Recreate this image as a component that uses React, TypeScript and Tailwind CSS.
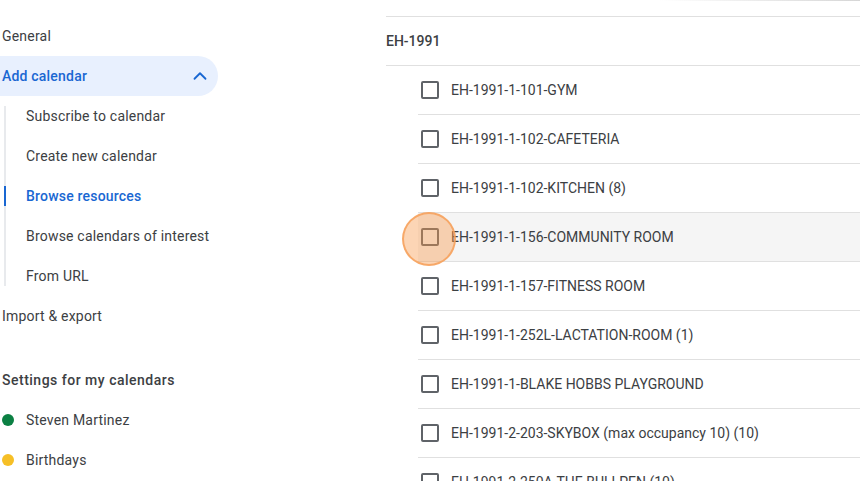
import { ChevronUp } from "lucide-react";

const subItems = [
  "Subscribe to calendar",
  "Create new calendar",
  "Browse resources",
  "Browse calendars of interest",
  "From URL",
];

const resources = [
  "EH-1991-1-101-GYM",
  "EH-1991-1-102-CAFETERIA",
  "EH-1991-1-102-KITCHEN (8)",
  "EH-1991-1-156-COMMUNITY ROOM",
  "EH-1991-1-157-FITNESS ROOM",
  "EH-1991-1-252L-LACTATION-ROOM (1)",
  "EH-1991-1-BLAKE HOBBS PLAYGROUND",
  "EH-1991-2-203-SKYBOX (max occupancy 10) (10)",
  "EH-1991-2-250A-THE BULLPEN (10)",
];

function Sidebar() {
  return (
    <nav className="w-[218px] shrink-0 pt-4 text-[14px] tracking-[0.2px] text-[#3c4043]">
      <div className="flex h-10 items-center pl-[2px]">General</div>

      <div className="flex h-10 items-center justify-between rounded-r-full bg-[#e8f0fe] pl-[2px] pr-[7px] font-medium text-[#1967d2]">
        <span>Add calendar</span>
        <ChevronUp size={22} strokeWidth={2} />
      </div>

      <div className="relative">
        <span className="absolute left-[4px] top-[10px] bottom-[10px] w-[2px] bg-[#e8eaed]" />
        {subItems.map((item) => {
          const active = item === "Browse resources";
          return (
            <div
              key={item}
              className={`relative flex h-10 items-center pl-[26px] ${
                active ? "font-medium text-[#1967d2]" : ""
              }`}
            >
              {active ? (
                <span className="absolute left-[4px] top-[10px] h-5 w-[2px] bg-[#1967d2]" />
              ) : null}
              {item}
            </div>
          );
        })}
      </div>

      <div className="flex h-10 items-center pl-[2px]">Import &amp; export</div>

      <div className="mt-6 flex h-10 items-center pl-[2px] font-medium tracking-[0.5px]">
        Settings for my calendars
      </div>
      <div className="flex h-10 items-center gap-[12px] pl-[2px]">
        <span className="h-3 w-3 rounded-full bg-[#0b8043]" />
        Steven Martinez
      </div>
      <div className="flex h-10 items-center gap-[12px] pl-[2px]">
        <span className="h-3 w-3 rounded-full bg-[#f6bf26]" />
        Birthdays
      </div>
    </nav>
  );
}

function ResourceList() {
  return (
    <section className="ml-[168px] flex-1 pt-4 text-[14px] text-[#3c4043]">
      <div className="flex h-[50px] items-center border-y border-[#e0e0e0] font-medium">
        EH-1991
      </div>
      <div className="ml-[32px]">
        {resources.map((name) => {
          const hovered = name === "EH-1991-1-156-COMMUNITY ROOM";
          return (
            <div
              key={name}
              className={`relative flex h-[49px] items-center gap-[12px] border-b border-[#e0e0e0] pl-[3px] ${
                hovered ? "bg-[#f5f5f5]" : ""
              }`}
            >
              <span className="h-[18px] w-[18px] shrink-0 rounded-[2px] border-2 border-[#5f6368]" />
              <span className="whitespace-nowrap">{name}</span>
              {hovered ? (
                <span className="absolute left-[-16px] top-[-1px] h-[54px] w-[54px] rounded-full border-2 border-[rgba(246,160,90,0.85)] bg-[rgba(248,150,70,0.4)]" />
              ) : null}
            </div>
          );
        })}
      </div>
    </section>
  );
}

export default function App() {
  return (
    <div
      className="relative flex h-[481px] w-[860px] overflow-hidden bg-white"
      style={{ fontFamily: "Roboto, 'Noto Sans', sans-serif" }}
    >
      <span className="absolute right-0 top-0 h-px w-[200px] bg-gradient-to-r from-transparent to-[#d6d6d6]" />
      <Sidebar />
      <ResourceList />
    </div>
  );
}
